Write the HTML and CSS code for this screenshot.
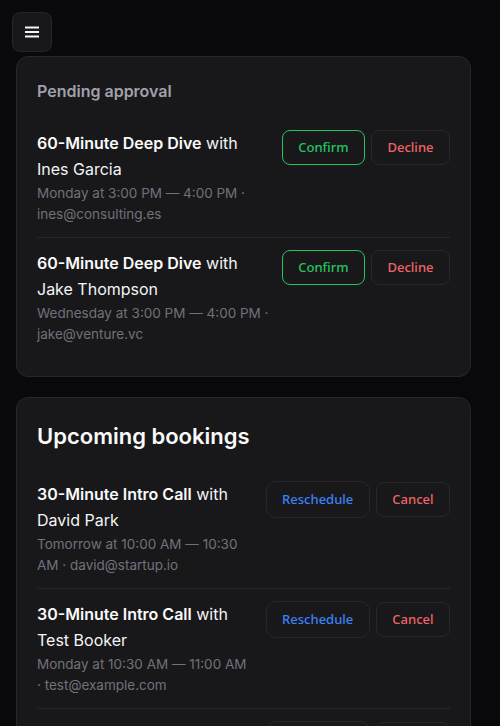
FILE: index.html
```html
<!DOCTYPE html>
<html lang="en">
<head>
  <meta charset="UTF-8">
  <title>Bookings</title>
  <meta name="viewport" content="width=device-width, initial-scale=1.0">
  <link rel="stylesheet" href="styles.css">
</head>
<body>

  <div class="topbar">
    <button class="menu-btn" aria-label="Open menu">
      <svg width="16" height="16" viewBox="0 0 16 16" fill="none" stroke="#f4f4f5" stroke-width="2">
        <line x1="1" y1="3.5" x2="15" y2="3.5"/>
        <line x1="1" y1="8" x2="15" y2="8"/>
        <line x1="1" y1="12.5" x2="15" y2="12.5"/>
      </svg>
    </button>
  </div>

  <main class="content">

    <section class="card">
      <h3 class="card-label">Pending approval</h3>

      <div class="booking">
        <div class="booking-info">
          <div class="booking-title"><strong>60-Minute Deep Dive</strong> with Ines Garcia</div>
          <div class="booking-meta">Monday at 3:00 PM — 4:00 PM · ines@consulting.es</div>
        </div>
        <div class="booking-actions">
          <button class="btn btn-confirm">Confirm</button>
          <button class="btn btn-danger">Decline</button>
        </div>
      </div>

      <div class="booking">
        <div class="booking-info">
          <div class="booking-title"><strong>60-Minute Deep Dive</strong> with Jake Thompson</div>
          <div class="booking-meta">Wednesday at 3:00 PM — 4:00 PM · jake@venture.vc</div>
        </div>
        <div class="booking-actions">
          <button class="btn btn-confirm">Confirm</button>
          <button class="btn btn-danger">Decline</button>
        </div>
      </div>
    </section>

    <section class="card">
      <h2 class="card-title">Upcoming bookings</h2>

      <div class="booking">
        <div class="booking-info">
          <div class="booking-title"><strong>30-Minute Intro Call</strong> with David Park</div>
          <div class="booking-meta">Tomorrow at 10:00 AM — 10:30 AM · david@startup.io</div>
        </div>
        <div class="booking-actions">
          <a class="btn btn-link" href="#">Reschedule</a>
          <button class="btn btn-danger">Cancel</button>
        </div>
      </div>

      <div class="booking">
        <div class="booking-info">
          <div class="booking-title"><strong>30-Minute Intro Call</strong> with Test Booker</div>
          <div class="booking-meta">Monday at 10:30 AM — 11:00 AM · test@example.com</div>
        </div>
        <div class="booking-actions">
          <a class="btn btn-link" href="#">Reschedule</a>
          <button class="btn btn-danger">Cancel</button>
        </div>
      </div>

      <div class="booking">
        <div class="booking-info">
          <div class="booking-title"><strong>60-Minute Deep Dive</strong> with Maria Lopez</div>
          <div class="booking-meta">Thursday at 2:00 PM — 3:00 PM · maria@studio.io</div>
        </div>
        <div class="booking-actions">
          <a class="btn btn-link" href="#">Reschedule</a>
          <button class="btn btn-danger">Cancel</button>
        </div>
      </div>
    </section>

  </main>

</body>
</html>
```

FILE: styles.css
```css
body {
  font-family: 'Inter', 'Noto Sans', sans-serif;
  background: #09090b;
  color: #fafafa;
  margin: 0;
  padding: 0;
}

.topbar {
  padding: 12px 12px 4px;
}

.menu-btn {
  width: 40px;
  height: 40px;
  display: flex;
  align-items: center;
  justify-content: center;
  padding: 0;
  background: #18181b;
  border: 1px solid #27272a;
  border-radius: 8px;
  cursor: pointer;
}

.content {
  padding: 0 29px 0 16px;
  display: flex;
  flex-direction: column;
  gap: 20px;
}

.card {
  background: #18181b;
  border: 1px solid #27272a;
  border-radius: 12px;
  padding: 20px 20px 19px;
}

.card-label {
  margin: 0 0 13px;
  font-size: 16px;
  line-height: 28px;
  font-weight: 600;
  color: #a1a1aa;
}

.card-title {
  margin: 0 0 15px;
  font-size: 22px;
  line-height: 36px;
  font-weight: 600;
  color: #fafafa;
}

.booking {
  display: flex;
  align-items: flex-start;
  gap: 12px;
  padding: 12px 0;
}

.booking + .booking {
  border-top: 1px solid #27272a;
}

.booking-info {
  flex: 1;
  min-width: 0;
}

.booking-title {
  font-size: 16px;
  line-height: 26px;
  color: #f4f4f5;
}

.booking-title strong {
  font-weight: 600;
  color: #fafafa;
}

.booking-meta {
  margin-top: 1px;
  font-size: 13.5px;
  line-height: 21px;
  color: #71717a;
}

.booking-actions {
  display: flex;
  align-items: center;
  gap: 6px;
  flex-shrink: 0;
}

.btn {
  font-family: 'Noto Sans', sans-serif;
  font-size: 13px;
  font-weight: 500;
  line-height: 17px;
  padding: 8px 15.5px;
  border: 1px solid #27272a;
  border-radius: 8px;
  background: #18181b;
  cursor: pointer;
  text-decoration: none;
}

.btn-confirm {
  border-color: #22c55e;
  color: #22c55e;
  background: transparent;
}

.btn-danger {
  color: #ef6464;
}

.btn-link {
  display: block;
  padding: 9px 15.5px;
  border-radius: 10px;
  color: #3b82f6;
}
```
